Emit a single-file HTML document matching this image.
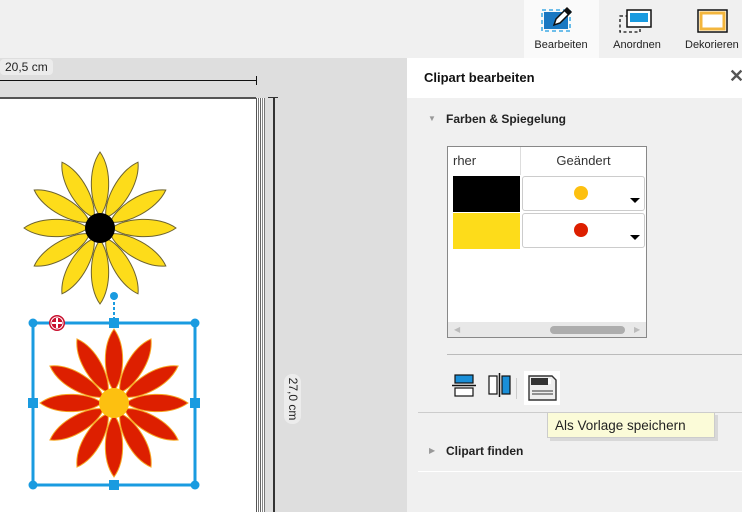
<!DOCTYPE html>
<html><head><meta charset="utf-8"><style>
*{margin:0;padding:0;box-sizing:border-box}
body{width:742px;height:512px;overflow:hidden;background:#f0f0f0;font-family:"Liberation Sans",sans-serif;position:relative}
.abs{position:absolute}
.lbl{font-size:11px;color:#222;text-align:center;width:74px}
</style></head><body>
<div class="abs" style="left:0;top:0;width:742px;height:58px;background:#f0f0f0"></div>
<div class="abs" style="left:524px;top:0;width:75px;height:58px;background:#fafafa"></div>
<svg class="abs" style="left:540px;top:6px" width="40" height="30" viewBox="0 0 40 30">
<rect x="4" y="6" width="24" height="17" fill="#1a78c2"/>
<rect x="2" y="4" width="28" height="21" fill="none" stroke="#1a9be0" stroke-width="1.3" stroke-dasharray="4 3"/>
<path d="M14 19 L16 13 L27 2 L31 6 L20 17 Z" fill="#fff" stroke="#111" stroke-width="1.5"/>
<path d="M24 5 L28 9 L31 6 L27 2Z" fill="#111"/>
</svg>
<div class="abs lbl" style="left:524px;top:39px">Bearbeiten</div>
<svg class="abs" style="left:618px;top:8px" width="36" height="26" viewBox="0 0 36 26">
<rect x="2" y="8" width="20" height="16" fill="none" stroke="#111" stroke-width="1.3" stroke-dasharray="3 2.5"/>
<rect x="9" y="2" width="24" height="17" fill="#fff" stroke="#111" stroke-width="1.5"/>
<rect x="12" y="5" width="18" height="9" fill="#1a9be0"/>
</svg>
<div class="abs lbl" style="left:600px;top:39px">Anordnen</div>
<svg class="abs" style="left:697px;top:9px" width="32" height="24" viewBox="0 0 32 24">
<rect x="1" y="1" width="29" height="22" fill="#fff" stroke="#111" stroke-width="1.5"/>
<rect x="4" y="4" width="23" height="16" fill="none" stroke="#f3b63d" stroke-width="3"/>
</svg>
<div class="abs lbl" style="left:685px;top:39px;text-align:left">Dekorieren</div>

<div class="abs" style="left:0;top:58px;width:407px;height:454px;background:#dedede"></div>
<div class="abs" style="left:0;top:59px;padding:1px 5px;background:#ececec;border-radius:4px;font-size:12px;color:#222">20,5 cm</div>
<div class="abs" style="left:0;top:80px;width:256px;height:1px;background:#111"></div>
<div class="abs" style="left:256px;top:76px;width:1px;height:9px;background:#111"></div>
<div class="abs" style="left:0;top:98px;width:256px;height:414px;background:#fff"></div>
<div class="abs" style="left:256px;top:98px;width:20px;height:414px;background:linear-gradient(90deg,#555 0 1px,#fff 1px 2px,#777 2px 3px,#fff 3px 4px,#666 4px 5px,#fff 5px 6px,#888 6px 7px,#fff 7px 8px,#777 8px 9px,#dedede 9px 10px,#dedede 10px 17px,#333 17px 19px,#dedede 19px)"></div>
<div class="abs" style="left:0;top:97px;width:256px;height:2px;background:#555"></div>
<div class="abs" style="left:268px;top:97px;width:10px;height:1px;background:#333"></div>
<div class="abs" style="left:284px;top:374px;width:17px;height:50px;background:#ececec;border-radius:8px"></div>
<div class="abs" style="left:268px;top:392px;width:50px;font-size:12px;color:#222;transform:rotate(90deg);text-align:center">27,0 cm</div>

<svg class="abs" style="left:0;top:0" width="407" height="512">
<defs>
<path id="p" d="M0 -12 C -10 -24 -13 -58 0 -76 C 13 -58 10 -24 0 -12Z"/>
<path id="q" d="M0 -12 C -10 -24 -13 -56 0 -74 C 13 -56 10 -24 0 -12Z"/>
</defs>
<g transform="translate(100,228)" fill="#fddc1a" stroke="#6d6330" stroke-width="1">
<use href="#p"/><use href="#p" transform="rotate(30)"/><use href="#p" transform="rotate(60)"/><use href="#p" transform="rotate(90)"/><use href="#p" transform="rotate(120)"/><use href="#p" transform="rotate(150)"/><use href="#p" transform="rotate(180)"/><use href="#p" transform="rotate(210)"/><use href="#p" transform="rotate(240)"/><use href="#p" transform="rotate(270)"/><use href="#p" transform="rotate(300)"/><use href="#p" transform="rotate(330)"/>
<circle r="15" fill="#000" stroke="none"/>
</g>
<g transform="translate(114,403)" fill="#dd1f00" stroke="#f6a623" stroke-width="1">
<use href="#q"/><use href="#q" transform="rotate(30)"/><use href="#q" transform="rotate(60)"/><use href="#q" transform="rotate(90)"/><use href="#q" transform="rotate(120)"/><use href="#q" transform="rotate(150)"/><use href="#q" transform="rotate(180)"/><use href="#q" transform="rotate(210)"/><use href="#q" transform="rotate(240)"/><use href="#q" transform="rotate(270)"/><use href="#q" transform="rotate(300)"/><use href="#q" transform="rotate(330)"/>
<circle r="15" fill="#fdc010" stroke="none"/>
</g>
<g stroke="#1a9be0" fill="#1a9be0">
<rect x="33" y="323" width="162" height="162" fill="none" stroke-width="3"/>
<line x1="114" y1="297" x2="114" y2="323" stroke-width="2" stroke-dasharray="3 2"/>
<circle cx="114" cy="296" r="4" stroke="none"/>
<circle cx="33" cy="323" r="4.5" stroke="none"/><circle cx="195" cy="323" r="4.5" stroke="none"/>
<circle cx="33" cy="485" r="4.5" stroke="none"/><circle cx="195" cy="485" r="4.5" stroke="none"/>
<rect x="109" y="318" width="10" height="10" stroke="none"/><rect x="109" y="480" width="10" height="10" stroke="none"/>
<rect x="28" y="398" width="10" height="10" stroke="none"/><rect x="190" y="398" width="10" height="10" stroke="none"/>
</g>
<circle cx="57" cy="323" r="8" fill="#c8102e"/>
<circle cx="57" cy="323" r="6" fill="none" stroke="#fff" stroke-width="1"/>
<path d="M57 318v10M52 323h10" stroke="#fff" stroke-width="2"/>
</svg>

<div class="abs" style="left:407px;top:58px;width:335px;height:454px;background:#f0f0f0"></div>
<div class="abs" style="left:407px;top:58px;width:335px;height:40px;background:#fff"></div>
<div class="abs" style="left:424px;top:70px;font-size:13px;font-weight:bold;color:#111">Clipart bearbeiten</div>
<div class="abs" style="left:729px;top:66px;font-size:18px;color:#555;font-weight:bold">✕</div>
<div class="abs" style="left:428px;top:114px;font-size:8px;color:#999">▼</div>
<div class="abs" style="left:446px;top:112px;font-size:12px;font-weight:bold;color:#222">Farben &amp; Spiegelung</div>
<div class="abs" style="left:447px;top:146px;width:200px;height:192px;background:#fff;border:1px solid #888"></div>
<div class="abs" style="left:453px;top:153px;font-size:13px;color:#333">rher</div>
<div class="abs" style="left:520px;top:147px;width:1px;height:28px;background:#ddd"></div>
<div class="abs" style="left:521px;top:153px;width:125px;text-align:center;font-size:13px;color:#333">Geändert</div>
<div class="abs" style="left:453px;top:176px;width:67px;height:36px;background:#000"></div>
<div class="abs" style="left:453px;top:213px;width:67px;height:36px;background:#fddc1a"></div>
<div class="abs" style="left:522px;top:176px;width:123px;height:35px;background:#fff;border:1px solid #ccc;border-radius:3px"></div>
<div class="abs" style="left:522px;top:213px;width:123px;height:35px;background:#fff;border:1px solid #ccc;border-radius:3px"></div>
<div class="abs" style="left:574px;top:186px;width:14px;height:14px;border-radius:50%;background:#fdc010"></div>
<div class="abs" style="left:574px;top:223px;width:14px;height:14px;border-radius:50%;background:#dd1f00"></div>
<div class="abs" style="left:630px;top:198px;border:5px solid transparent;border-top:5px solid #000"></div>
<div class="abs" style="left:630px;top:235px;border:5px solid transparent;border-top:5px solid #000"></div>
<div class="abs" style="left:448px;top:322px;width:198px;height:15px;background:#e8e8e8"></div>
<div class="abs" style="left:550px;top:326px;width:75px;height:8px;background:#adadad;border-radius:4px"></div>
<div class="abs" style="left:454px;top:325px;font-size:8px;color:#bbb">◀</div>
<div class="abs" style="left:634px;top:325px;font-size:8px;color:#bbb">▶</div>
<div class="abs" style="left:447px;top:354px;width:295px;height:1px;background:#bbb"></div>
<svg class="abs" style="left:450px;top:370px" width="120" height="36">
<rect x="5" y="5" width="18" height="8" fill="#1a8fd8" stroke="#111" stroke-width="1.2"/>
<line x1="2" y1="15.5" x2="26" y2="15.5" stroke="#111" stroke-width="1.5"/>
<rect x="5" y="18" width="18" height="8" fill="#fff" stroke="#111" stroke-width="1.2"/>
<rect x="39" y="6" width="8" height="18" fill="#fff" stroke="#111" stroke-width="1.2"/>
<line x1="49.5" y1="3" x2="49.5" y2="27" stroke="#111" stroke-width="1.5"/>
<rect x="52" y="6" width="8" height="18" fill="#1a8fd8" stroke="#111" stroke-width="1.2"/>
<line x1="66.5" y1="8" x2="66.5" y2="29" stroke="#ccc"/>
<rect x="74" y="1" width="36" height="34" fill="#fff"/>
<path d="M79 6 H102 L106 10 V30 H79Z" fill="#eee" stroke="#333" stroke-width="1.4"/>
<rect x="81" y="8" width="17" height="7" fill="#333"/>
<rect x="98" y="9" width="3" height="5" fill="#fff"/>
<line x1="82" y1="21" x2="103" y2="21" stroke="#333" stroke-width="1"/>
<line x1="82" y1="24" x2="103" y2="24" stroke="#333" stroke-width="1"/>
</svg>
<div class="abs" style="left:418px;top:412px;width:324px;height:1px;background:#ccc"></div>
<div class="abs" style="left:550px;top:415px;width:168px;height:26px;background:#d8d8d8"></div>
<div class="abs" style="left:547px;top:412px;width:168px;height:26px;background:#fbfbd8;border:1px solid #ccc;font-size:13.5px;color:#222;padding:5px 0 0 7px">Als Vorlage speichern</div>
<div class="abs" style="left:429px;top:446px;font-size:8px;color:#999">▶</div>
<div class="abs" style="left:446px;top:444px;font-size:12px;font-weight:bold;color:#222">Clipart finden</div>
<div class="abs" style="left:418px;top:471px;width:324px;height:1px;background:#fff"></div>
</body></html>
